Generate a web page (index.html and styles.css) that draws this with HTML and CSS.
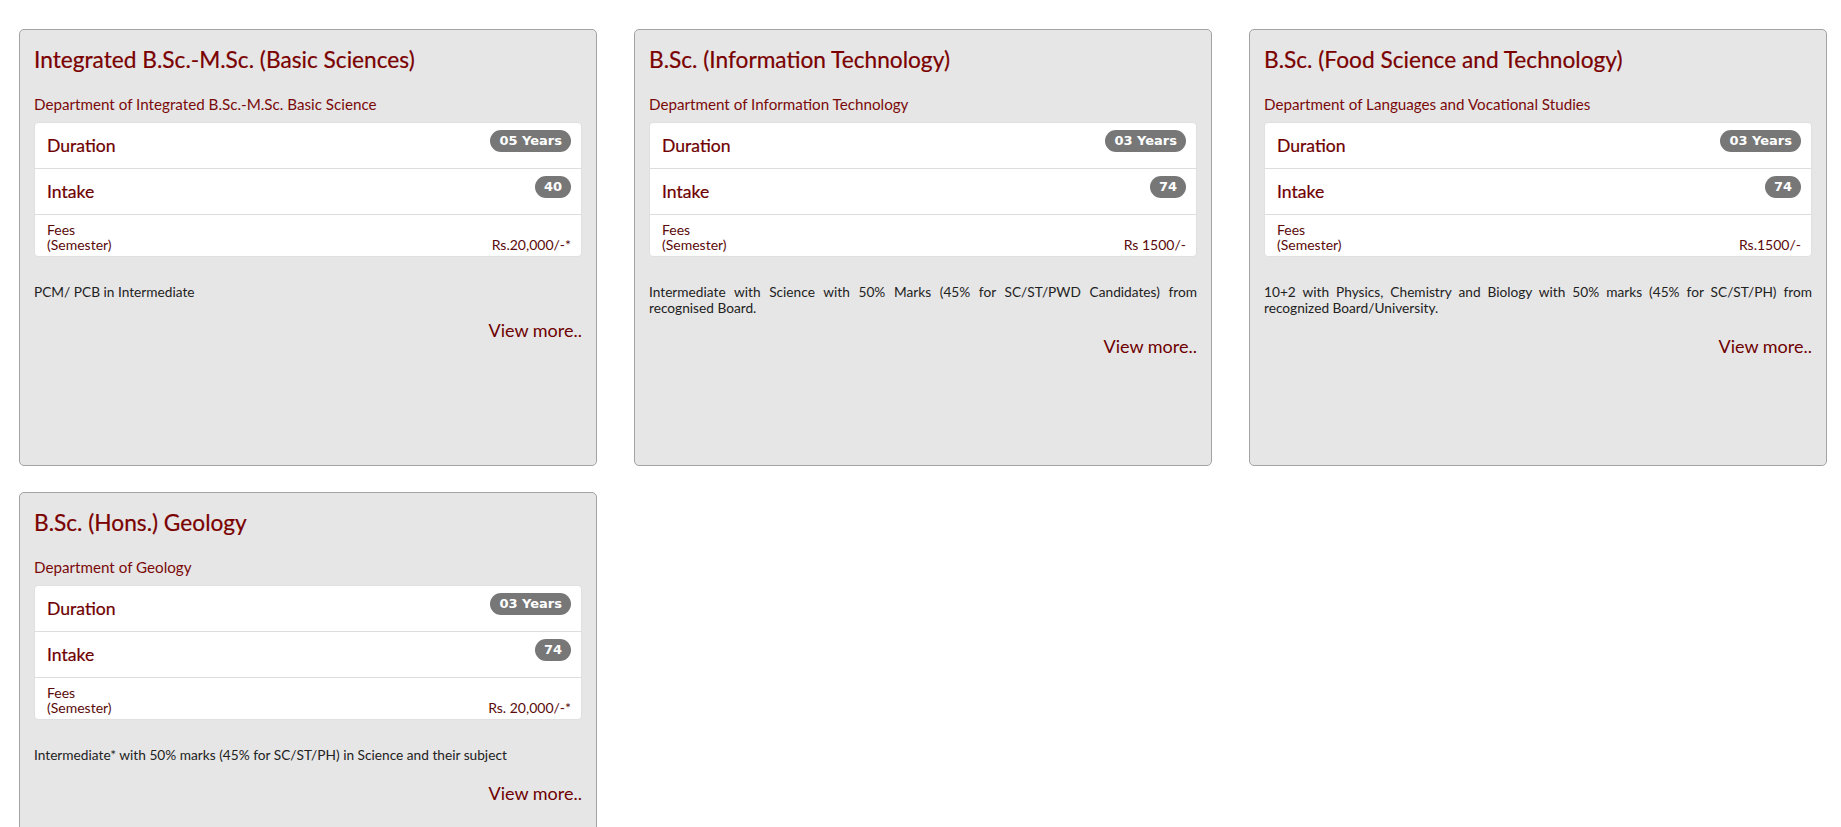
FILE: index.html
```html
<!DOCTYPE html>
<html lang="en">
<head>
    <meta charset="UTF-8">
    <meta name="viewport" content="width=device-width, initial-scale=1.0">
    <title>Courses</title>
    <link rel="stylesheet" href="styles.css">
</head>
<body>
    <div class="course-list">

        <!-- Integrated B.Sc.-M.Sc. -->
        <div class="course-card">
            <h4 class="course-title">Integrated B.Sc.-M.Sc. (Basic Sciences)</h4>
            <p class="course-dept">Department of Integrated B.Sc.-M.Sc. Basic Science</p>
            <ul class="course-info">
                <li class="info-item">
                    <span class="info-label">Duration</span>
                    <span class="badge">05 Years</span>
                </li>
                <li class="info-item">
                    <span class="info-label">Intake</span>
                    <span class="badge">40</span>
                </li>
                <li class="info-item fees">
                    <span>Fees<br>(Semester)</span>
                    <span>Rs.20,000/-*</span>
                </li>
            </ul>
            <p class="course-eligibility">PCM/ PCB in Intermediate</p>
            <a href="#" class="view-more">View more..</a>
        </div>

        <!-- B.Sc. IT -->
        <div class="course-card">
            <h4 class="course-title">B.Sc. (Information Technology)</h4>
            <p class="course-dept">Department of Information Technology</p>
            <ul class="course-info">
                <li class="info-item">
                    <span class="info-label">Duration</span>
                    <span class="badge">03 Years</span>
                </li>
                <li class="info-item">
                    <span class="info-label">Intake</span>
                    <span class="badge">74</span>
                </li>
                <li class="info-item fees">
                    <span>Fees<br>(Semester)</span>
                    <span>Rs 1500/-</span>
                </li>
            </ul>
            <p class="course-eligibility">Intermediate with Science with 50% Marks (45% for SC/ST/PWD Candidates) from recognised Board.</p>
            <a href="#" class="view-more">View more..</a>
        </div>

        <!-- B.Sc. Food Science -->
        <div class="course-card">
            <h4 class="course-title">B.Sc. (Food Science and Technology)</h4>
            <p class="course-dept">Department of Languages and Vocational Studies</p>
            <ul class="course-info">
                <li class="info-item">
                    <span class="info-label">Duration</span>
                    <span class="badge">03 Years</span>
                </li>
                <li class="info-item">
                    <span class="info-label">Intake</span>
                    <span class="badge">74</span>
                </li>
                <li class="info-item fees">
                    <span>Fees<br>(Semester)</span>
                    <span>Rs.1500/-</span>
                </li>
            </ul>
            <p class="course-eligibility">10+2 with Physics, Chemistry and Biology with 50% marks (45% for SC/ST/PH) from recognized Board/University.</p>
            <a href="#" class="view-more">View more..</a>
        </div>

        <!-- B.Sc. Geology -->
        <div class="course-card">
            <h4 class="course-title">B.Sc. (Hons.) Geology</h4>
            <p class="course-dept">Department of Geology</p>
            <ul class="course-info">
                <li class="info-item">
                    <span class="info-label">Duration</span>
                    <span class="badge">03 Years</span>
                </li>
                <li class="info-item">
                    <span class="info-label">Intake</span>
                    <span class="badge">74</span>
                </li>
                <li class="info-item fees">
                    <span>Fees<br>(Semester)</span>
                    <span>Rs. 20,000/-*</span>
                </li>
            </ul>
            <p class="course-eligibility">Intermediate* with 50% marks (45% for SC/ST/PH) in Science and their subject</p>
            <a href="#" class="view-more">View more..</a>
        </div>

    </div>
</body>
</html>
```

FILE: styles.css
```css
body {
    margin: 0;
    font-family: "Trebuchet MS", Lato, sans-serif;
    color: #333;
    background: #fff;
}

.course-list {
    display: grid;
    grid-template-columns: repeat(3, 578px);
    column-gap: 37px;
    row-gap: 26px;
    padding: 29px 0 0 19px;
}

.course-card {
    box-sizing: border-box;
    height: 437px;
    padding: 16px 14px;
    background-color: #e6e6e6;
    border: 1px solid #a3a3a3;
    border-radius: 5px;
    display: flex;
    flex-direction: column;
}

.course-title {
    margin: 0;
    font-size: 22.7px;
    font-weight: normal;
    line-height: 27px;
    color: #7a0000;
    -webkit-text-stroke: 0.2px #7a0000;
}

.course-dept {
    margin: 22px 0 9px;
    font-size: 15.2px;
    line-height: 18px;
    color: #7a0a0a;
}

.course-info {
    list-style: none;
    margin: 0;
    padding: 0;
    background: #fff;
    border-radius: 4px;
    border: 1px solid #e0e0e0;
}

.info-item {
    box-sizing: border-box;
    display: flex;
    justify-content: space-between;
    align-items: flex-start;
    height: 46px;
    padding: 7px 10px 0 12px;
    border-bottom: 1px solid #ddd;
    color: #6e0000;
}

.info-label {
    margin-top: 5px;
    font-size: 17.6px;
    line-height: 22px;
    -webkit-text-stroke: 0.2px #6e0000;
}

.badge {
    padding: 0 9px;
    height: 22px;
    line-height: 22px;
    border-radius: 11px;
    background-color: #777;
    color: #fff;
    font-family: "DejaVu Sans", sans-serif;
    font-size: 13px;
    font-weight: bold;
}

.info-item.fees {
    height: auto;
    align-items: flex-end;
    padding: 7px 10px 4px 12px;
    border-bottom: none;
    font-size: 14px;
    line-height: 15px;
    color: #5a0a0a;
}

.course-eligibility {
    margin: 27px 0 0;
    font-size: 13.7px;
    line-height: 16px;
    text-align: justify;
    color: #222;
}

.view-more {
    align-self: flex-end;
    margin-top: 19px;
    font-size: 18px;
    line-height: 22px;
    color: #6e0000;
    text-decoration: none;
}
```
